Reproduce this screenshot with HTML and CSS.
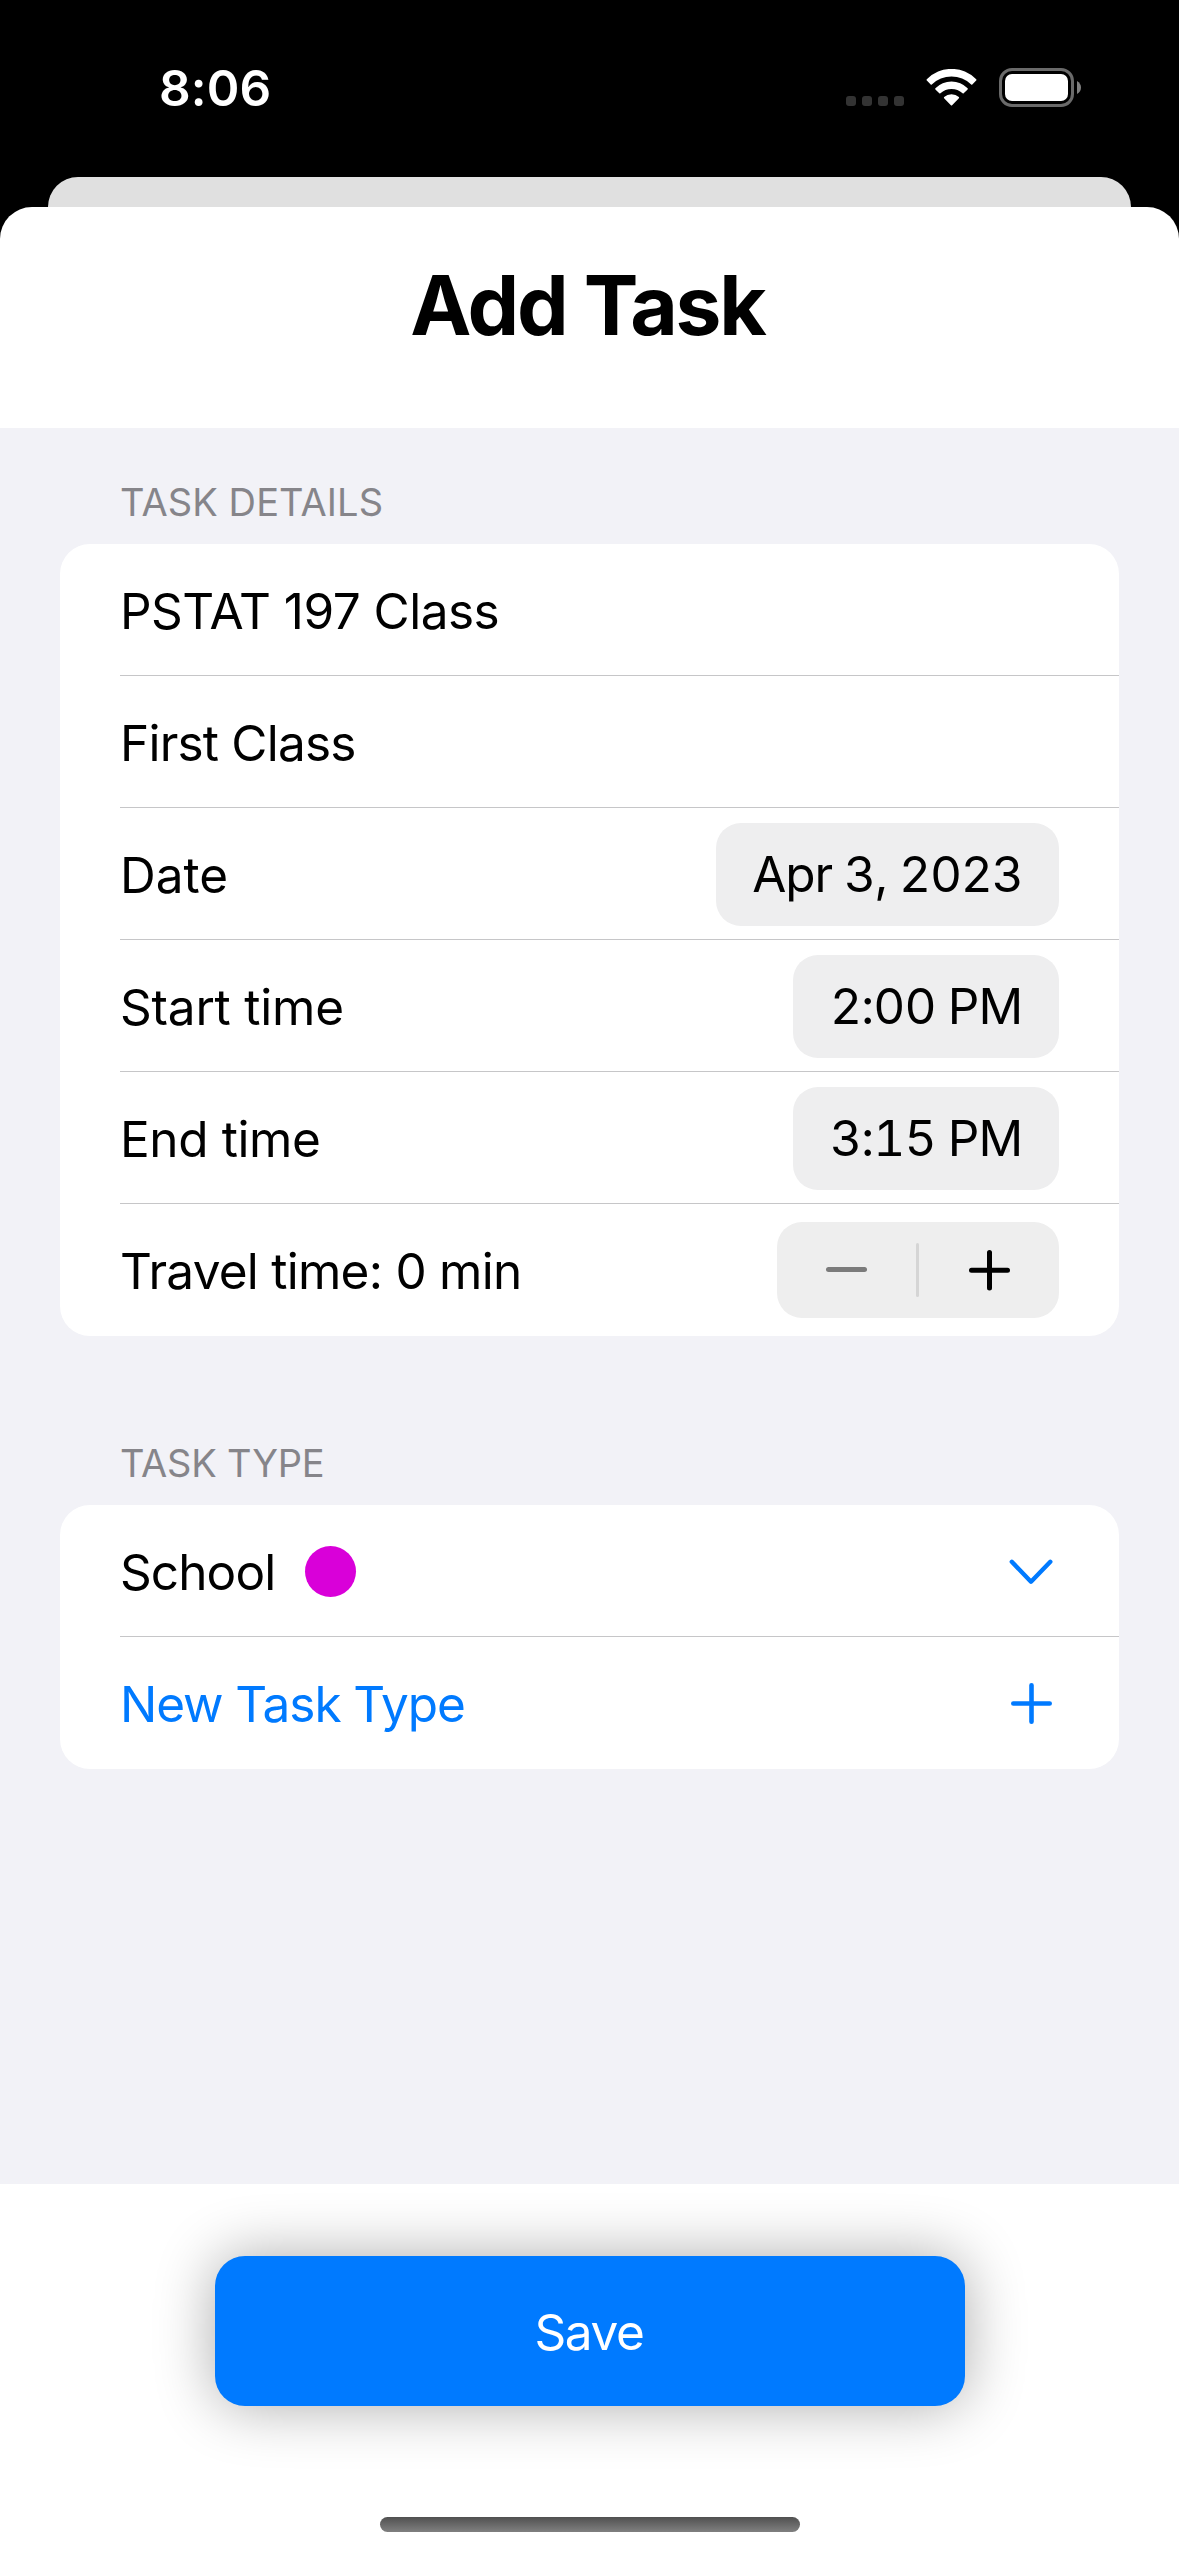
FILE: index.html
```html
<!DOCTYPE html>
<html lang="en">
<head>
<meta charset="utf-8">
<title>Add Task</title>
<link rel="stylesheet" href="styles.css">
</head>
<body>
<div class="screen">
  <header class="status">
    <span class="clock">8:06</span>
    <div class="indicators">
      <div class="cell"><i class="dot"></i><i class="dot"></i><i class="dot"></i><i class="dot"></i></div>
      <svg class="wifi" width="51" height="37" viewBox="0 0 51 37" fill="#fff">
        <path d="M0.8 10.3A34.5 34.5 0 0 1 50.2 10.3Q50.7 10.9 50.2 11.5L46.3 15.4Q45.8 15.9 45.2 15.4A28.5 28.5 0 0 0 5.8 15.4Q5.2 15.9 4.7 15.4L0.8 11.5Q0.3 10.9 0.8 10.3Z"/>
        <path d="M9.4 19.3A22.5 22.5 0 0 1 41.6 19.3Q42.1 19.9 41.6 20.4L37.7 24.3Q37.2 24.8 36.6 24.3A16.5 16.5 0 0 0 14.4 24.3Q13.8 24.8 13.3 24.3L9.4 20.4Q8.9 19.9 9.4 19.3Z"/>
        <path d="M18.1 28.1A10.8 10.8 0 0 1 32.9 28.1Q33.4 28.7 32.9 29.2L26.1 36.2Q25.5 36.8 24.9 36.2L18.1 29.2Q17.6 28.7 18.1 28.1Z"/>
      </svg>
      <svg class="battery" width="82" height="39" viewBox="0 0 82 39">
        <rect x="1.5" y="1.5" width="72" height="36" rx="11.5" fill="none" stroke="#6a6a6a" stroke-width="3"/>
        <rect x="6" y="6" width="63" height="27" rx="7" fill="#fff"/>
        <path d="M78 13Q82 15.5 82 19.5T78 26Z" fill="#808080"/>
      </svg>
    </div>
  </header>
  <div class="back-sheet"></div>
  <main class="sheet">
    <h1 class="title">Add Task</h1>
    <div class="form">
      <h2 class="caption">TASK DETAILS</h2>
      <section class="card">
        <div class="row"><span class="label t-name">PSTAT 197 Class</span></div>
        <div class="row"><span class="label t-note">First Class</span></div>
        <div class="row"><span class="label">Date</span><span class="pill pill-date">Apr 3, 2023</span></div>
        <div class="row"><span class="label t-start">Start time</span><span class="pill">2:00 PM</span></div>
        <div class="row"><span class="label t-end">End time</span><span class="pill">3:15 PM</span></div>
        <div class="row">
          <span class="label t-travel">Travel time: 0 min</span>
          <div class="stepper">
            <svg width="139" height="96" viewBox="0 0 139 96"><path d="M51.5 47.5H87.5" stroke="#7b7b7b" stroke-width="5" stroke-linecap="round"/></svg>
            <i class="divider"></i>
            <svg width="140" height="96" viewBox="0 0 140 96"><path d="M52.5 48.3H88.5M70.5 30.5V66" stroke="#000" stroke-width="5" stroke-linecap="round"/></svg>
          </div>
        </div>
      </section>
      <h2 class="caption caption-type">TASK TYPE</h2>
      <section class="card">
        <div class="row">
          <span class="label t-school">School</span><i class="swatch"></i>
          <svg class="chevron" width="44" height="27" viewBox="0 0 44 27" fill="none"><path d="M2.8 2.8L22 22.7L41.3 2.8" stroke="#007aff" stroke-width="4.4" stroke-linecap="round" stroke-linejoin="round"/></svg>
        </div>
        <div class="row add">
          <span class="label t-new">New Task Type</span>
          <svg class="plus" width="41" height="41" viewBox="0 0 41 41"><path d="M2.3 20.5H38.7M20.5 2.3V38.7" stroke="#007aff" stroke-width="4.6" stroke-linecap="round"/></svg>
        </div>
      </section>
    </div>
    <footer class="footer">
      <button class="save">Save</button>
      <div class="home"></div>
    </footer>
  </main>
</div>
</body>
</html>
```
FILE: styles.css
```css
* { box-sizing: border-box; }
body { margin: 0; background: #000; }
.screen {
  width: 1179px;
  height: 2556px;
  display: flex;
  flex-direction: column;
  background: #000;
  overflow: hidden;
  font-family: Inter, "Liberation Sans", sans-serif;
  font-size: 49.5px;
  color: #000;
}
svg, i { display: block; flex: none; }

/* status bar */
.status {
  height: 177px;
  padding: 0 98px 0 159px;
  display: flex;
  justify-content: space-between;
  align-items: flex-start;
  color: #fff;
}
.clock { margin-top: 58px; line-height: 60px; font-weight: 600; letter-spacing: 0.1px; }
.indicators { display: flex; align-items: flex-start; padding-top: 68px; }
.cell { display: flex; gap: 6px; margin: 28px 22px 0 0; }
.dot { width: 10px; height: 10px; border-radius: 3px; background: #333; }
.wifi { margin: 1px 22px 0 0; }

/* stacked sheets */
.back-sheet { height: 30px; margin: 0 48px; border-radius: 30px 30px 0 0; background: #e0e0e0; }
.sheet {
  flex: 1;
  display: flex;
  flex-direction: column;
  border-radius: 32px 32px 0 0;
  background: #fff;
}
.title {
  margin: 0;
  height: 221px;
  padding: 56px 4px 0 0;
  line-height: 86px;
  font-size: 82px;
  font-weight: 700;
  letter-spacing: -2.2px;
  text-align: center;
}

/* form */
.form { height: 1756px; padding: 51px 60px 0; background: #f2f2f7; }
.caption {
  margin: 0 0 19px 60px;
  font-size: 38px;
  font-weight: 400;
  line-height: 46px;
  letter-spacing: 0.1px;
  color: #86858a;
}
.caption-type { margin-top: 104px; letter-spacing: -0.2px; }
.card { border-radius: 30px; background: #fff; overflow: hidden; }
.row {
  height: 132px;
  margin-left: 60px;
  padding-right: 60px;
  display: flex;
  align-items: center;
  border-bottom: 1px solid #c6c6c8;
}
.row:last-child { border-bottom-color: transparent; }
.label { padding-top: 3px; line-height: 60px; white-space: nowrap; }
.t-name { letter-spacing: -0.52px; }
.t-note { letter-spacing: -0.79px; }
.t-start { letter-spacing: -0.2px; }
.t-end { letter-spacing: -0.4px; }
.t-travel { letter-spacing: -0.74px; }
.t-school { letter-spacing: -0.9px; }
.t-new { letter-spacing: -1.08px; }

.pill {
  width: 266px;
  height: 103px;
  margin: 1px 0 0 auto;
  border-radius: 25px;
  background: #eeeeef;
  line-height: 103px;
  letter-spacing: -1px;
  font-variant-numeric: tabular-nums;
  text-align: center;
}
.pill-date { width: 343px; letter-spacing: -1.2px; }
.stepper {
  height: 96px;
  margin: 1px 0 0 auto;
  display: flex;
  align-items: center;
  border-radius: 25px;
  background: #eee;
}
.divider { width: 3px; height: 54px; border-radius: 1.5px; background: #d5d5d5; }
.swatch { width: 51px; height: 51px; margin: 2px 0 0 30px; border-radius: 50%; background: #d900d9; }
.chevron { margin: 4px 6px 0 auto; }
.plus { margin: 1px 7px 0 auto; }
.add { color: #007aff; }

/* footer */
.footer {
  flex: 1;
  display: flex;
  flex-direction: column;
  align-items: center;
  padding-top: 72px;
}
.save {
  width: 750px;
  height: 150px;
  padding: 2px 1px 0 0;
  border: 0;
  border-radius: 30px;
  background: #007aff;
  box-shadow: 0 0 60px rgba(0, 0, 0, 0.33);
  color: #fff;
  font: inherit;
  letter-spacing: -1.4px;
}
.home {
  width: 420px;
  height: 15px;
  margin-top: 111px;
  border-radius: 8px;
  background: linear-gradient(#505050, #808080);
}
```
